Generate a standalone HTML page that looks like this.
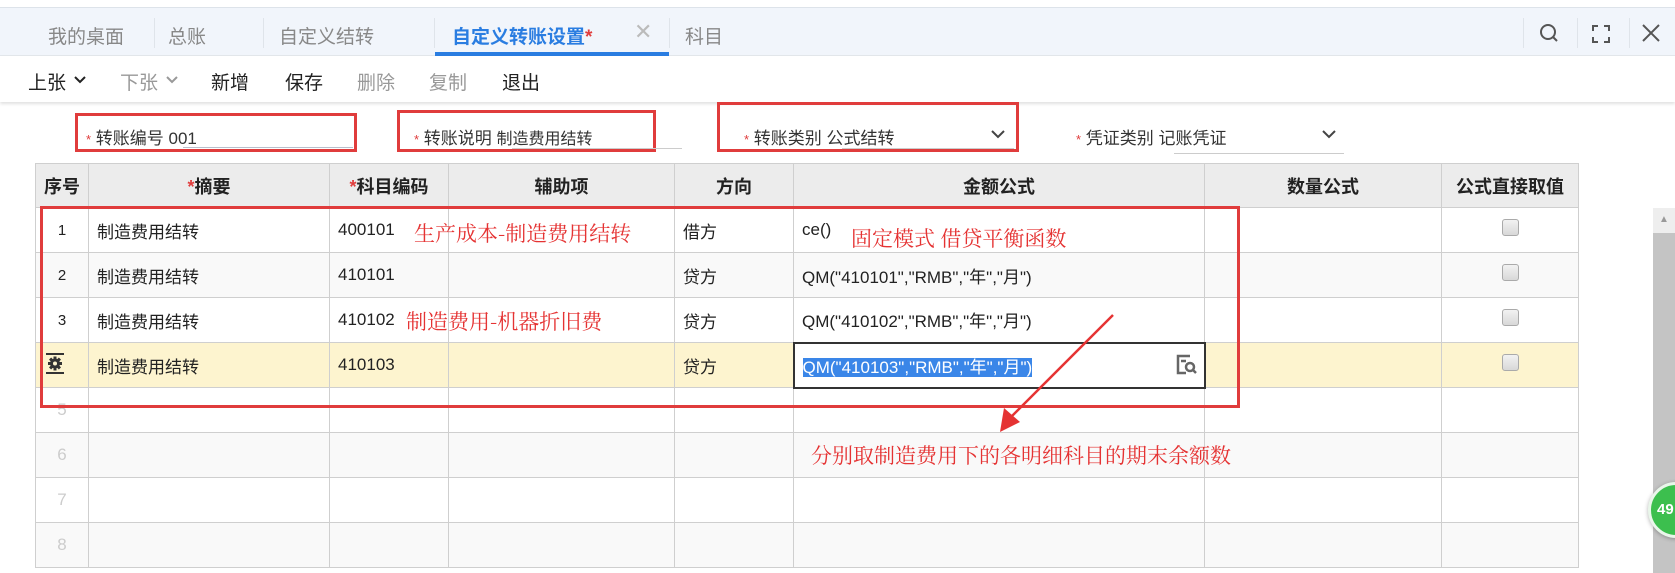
<!DOCTYPE html>
<html><head><meta charset="utf-8"><style>
*{margin:0;padding:0;box-sizing:border-box}
body{width:1675px;height:573px;overflow:hidden;background:#fff;font-family:"Liberation Sans","Noto Sans CJK SC",sans-serif;position:relative;color:#333}
.a{position:absolute}
.tabs{left:0;top:7px;width:1675px;height:49px;background:#f1f5fb;border-top:1px solid #dde3ea;border-bottom:1px solid #e3e7ec}
.tab{position:absolute;top:14px;font-size:19px;color:#888}
.sep{position:absolute;top:10px;width:1px;height:30px;background:#dfe4ea}
.tb{top:68px;font-size:19px;color:#222}
.tb.g{color:#999}
.toolbar{left:0;top:56px;width:1675px;height:46px;box-shadow:0 2px 3px rgba(0,0,0,.12)}
.rb{border:3px solid #e03c3c}
.lbl{font-size:17px;color:#333}
.st{color:#e03c3c;font-size:13px}
table{position:absolute;left:35px;top:163px;border-collapse:collapse;table-layout:fixed}
td,th{border:1px solid #cfcfcf;height:45px;font-size:17px;padding:0 8px;white-space:nowrap;overflow:hidden}
th{background:#ececec;font-weight:bold;height:44px;color:#222;font-size:18px}
td{color:#222}
tr.z td{background:#f9f9f9}
tr.y td{background:#fdf4cf}
.num{text-align:center;font-size:15px}
.num.l{color:#ccc;font-size:17px}
.cb{display:inline-block;width:17px;height:17px;border:1px solid #aaa;border-radius:3px;background:linear-gradient(#f2f2f2,#d8d8d8)}
.ann{font-family:"Noto Serif CJK SC","Liberation Serif",serif;color:#e53333;font-size:21px}
</style></head><body>
<div class="a tabs">
 <span class="tab" style="left:48px">我的桌面</span><div class="sep" style="left:154px"></div>
 <span class="tab" style="left:168px">总账</span><div class="sep" style="left:263px"></div>
 <span class="tab" style="left:279px">自定义结转</span><div class="sep" style="left:434px"></div>
 <span class="tab" style="left:452px;color:#2a7de1;font-weight:bold">自定义转账设置<span style="color:#e03c3c">*</span></span>
 <span class="tab" style="left:634px;color:#bbb;font-size:22px;top:11px">✕</span><div class="sep" style="left:669px"></div>
 <span class="tab" style="left:685px">科目</span>
 <div class="a" style="left:435px;top:44px;width:234px;height:4px;background:#2a7de1"></div>
 <div class="sep" style="left:1523px"></div><div class="sep" style="left:1577px"></div><div class="sep" style="left:1629px"></div>
 <svg class="a" style="left:1538px;top:14px" width="24" height="24"><circle cx="10" cy="10" r="7" fill="none" stroke="#555" stroke-width="2"/><line x1="15" y1="15" x2="19" y2="19" stroke="#555" stroke-width="2"/></svg>
 <svg class="a" style="left:1591px;top:16px" width="20" height="20" fill="none" stroke="#555" stroke-width="2"><path d="M2 7V2h5M13 2h5v5M18 13v5h-5M7 18H2v-5"/></svg>
 <svg class="a" style="left:1640px;top:14px" width="22" height="22" stroke="#555" stroke-width="2"><path d="M3 3L19 19M19 3L3 19"/></svg>
</div>
<div class="a toolbar"></div>
<span class="a tb" style="left:28px">上张</span>
<span class="a tb g" style="left:120px">下张</span>
<span class="a tb" style="left:211px">新增</span>
<span class="a tb" style="left:285px">保存</span>
<span class="a tb g" style="left:357px">删除</span>
<span class="a tb g" style="left:429px">复制</span>
<span class="a tb" style="left:502px">退出</span>
<svg class="a" style="left:74px;top:75px" width="12" height="10"><path d="M1 2l5 5 5-5" stroke="#222" stroke-width="2" fill="none"/></svg>
<svg class="a" style="left:166px;top:75px" width="12" height="10"><path d="M1 2l5 5 5-5" stroke="#999" stroke-width="2" fill="none"/></svg>

<div class="a rb" style="left:75px;top:113px;width:282px;height:39px"></div>
<span class="a lbl" style="left:86px;top:124px"><span class="st">*</span> 转账编号 001</span>
<div class="a" style="left:183px;top:147px;width:170px;height:1px;background:#b8bfcc"></div>
<div class="a rb" style="left:397px;top:110px;width:259px;height:42px"></div>
<span class="a lbl" style="left:414px;top:124px"><span class="st">*</span> 转账说明 <span style="font-size:16px">制造费用结转</span></span>
<div class="a" style="left:512px;top:148px;width:170px;height:1px;background:#ccc"></div>
<div class="a rb" style="left:717px;top:102px;width:302px;height:50px"></div>
<span class="a lbl" style="left:744px;top:124px"><span class="st">*</span> 转账类别 <span style="font-size:17px">公式结转</span></span>
<div class="a" style="left:842px;top:148px;width:172px;height:1px;background:#ccc"></div>
<svg class="a" style="left:991px;top:129px" width="14" height="10"><path d="M1 2l6 6 6-6" stroke="#444" stroke-width="2" fill="none"/></svg>
<span class="a lbl" style="left:1076px;top:124px"><span class="st">*</span> 凭证类别 <span style="font-size:17px">记账凭证</span></span>
<div class="a" style="left:1174px;top:153px;width:170px;height:1px;background:#ccc"></div>
<svg class="a" style="left:1322px;top:129px" width="14" height="10"><path d="M1 2l6 6 6-6" stroke="#444" stroke-width="2" fill="none"/></svg>

<table>
<colgroup><col style="width:52px"><col style="width:241px"><col style="width:119px"><col style="width:226px"><col style="width:119px"><col style="width:411px"><col style="width:237px"><col style="width:137px"></colgroup>
<tr><th>序号</th><th><span style="color:#e03c3c">*</span>摘要</th><th><span style="color:#e03c3c">*</span>科目编码</th><th>辅助项</th><th>方向</th><th>金额公式</th><th>数量公式</th><th>公式直接取值</th></tr>
<tr><td class="num">1</td><td>制造费用结转</td><td>400101</td><td></td><td>借方</td><td>ce()</td><td></td><td style="text-align:center"><span class="cb"></span></td></tr>
<tr class="z"><td class="num">2</td><td>制造费用结转</td><td>410101</td><td></td><td>贷方</td><td>QM("410101","RMB","年","月")</td><td></td><td style="text-align:center"><span class="cb"></span></td></tr>
<tr><td class="num">3</td><td>制造费用结转</td><td>410102</td><td></td><td>贷方</td><td>QM("410102","RMB","年","月")</td><td></td><td style="text-align:center"><span class="cb"></span></td></tr>
<tr class="y"><td class="num"></td><td>制造费用结转</td><td>410103</td><td></td><td>贷方</td><td style="background:#fff;border:2px solid #333"><span style="background:#3a86e8;color:#fff">QM("410103","RMB","年","月")</span></td><td></td><td style="text-align:center"><span class="cb"></span></td></tr>
<tr><td class="num l">5</td><td></td><td></td><td></td><td></td><td></td><td></td><td></td></tr>
<tr class="z"><td class="num l">6</td><td></td><td></td><td></td><td></td><td></td><td></td><td></td></tr>
<tr><td class="num l">7</td><td></td><td></td><td></td><td></td><td></td><td></td><td></td></tr>
<tr class="z"><td class="num l">8</td><td></td><td></td><td></td><td></td><td></td><td></td><td></td></tr>
</table>
<svg class="a" style="left:44px;top:352px" width="24" height="24"><rect x="2" y="1" width="18" height="2" fill="#333"/><rect x="2" y="20" width="18" height="2" fill="#333"/><g fill="#333"><circle cx="11" cy="11.5" r="5"/><rect x="9.5" y="4.5" width="3" height="14"/><rect x="4" y="10" width="14" height="3"/><rect x="9.5" y="4.5" width="3" height="14" transform="rotate(45 11 11.5)"/><rect x="9.5" y="4.5" width="3" height="14" transform="rotate(-45 11 11.5)"/></g><circle cx="11" cy="11.5" r="2" fill="#fdf4cf"/></svg>
<svg class="a" style="left:1175px;top:353px" width="24" height="24" fill="none" stroke="#666" stroke-width="2.5"><path d="M15 3H3v17h8"/><path d="M6 8h5"/><circle cx="15" cy="14" r="4"/><path d="M18 17l3 3"/></svg>

<div class="a rb" style="left:40px;top:206px;width:1200px;height:202px"></div>
<span class="a ann" style="left:414px;top:218px">生产成本-制造费用结转</span>
<span class="a ann" style="left:851px;top:223px">固定模式  借贷平衡函数</span>
<span class="a ann" style="left:406px;top:306px">制造费用-机器折旧费</span>
<span class="a ann" style="left:811px;top:440px">分别取制造费用下的各明细科目的期末余额数</span>
<svg class="a" style="left:0;top:0" width="1675" height="573"><line x1="1113" y1="315" x2="1010" y2="418" stroke="#e53333" stroke-width="2.5"/><polygon points="1000,432 1004,408 1020,422" fill="#e53333"/></svg>

<div class="a" style="left:1653px;top:208px;width:22px;height:365px;background:#c4c4c4"></div>
<div class="a" style="left:1653px;top:208px;width:22px;height:25px;background:#eee;color:#999;font-size:10px;text-align:center;line-height:24px">▲</div>
<div class="a" style="left:1648px;top:482px;width:56px;height:56px;border-radius:50%;background:#3cbf4e;border:3px solid #e9f6ea;box-shadow:0 1px 4px rgba(0,0,0,.3);color:#fff;font-weight:bold;font-size:15px;line-height:50px;padding-left:6px">49</div>
</body></html>
